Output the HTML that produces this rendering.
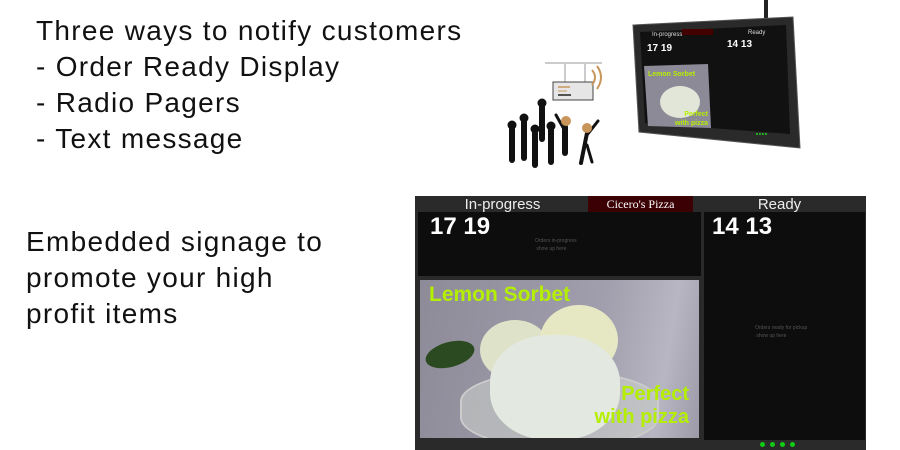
<!DOCTYPE html>
<html><head><meta charset="utf-8"><style>
body{margin:0;width:900px;height:450px;background:#fff;position:relative;overflow:hidden;font-family:"Liberation Sans",sans-serif}
.t{position:absolute;color:#111;font-size:28px;line-height:36px;letter-spacing:1.3px}
.a{position:absolute}
</style></head><body>
<div class="t" style="left:36px;top:13px">Three ways to notify customers<br>- Order Ready Display<br>- Radio Pagers<br>- Text message</div>
<div class="t" style="left:26px;top:224px;line-height:36px">Embedded signage to<br>promote your high<br>profit items</div>

<svg class="a" style="left:495px;top:55px" width="120" height="115" viewBox="0 0 120 115">
<line x1="50" y1="8" x2="107" y2="8" stroke="#ccc" stroke-width="2"/>
<line x1="70" y1="8" x2="70" y2="28" stroke="#ccc" stroke-width="2"/>
<line x1="90" y1="8" x2="90" y2="28" stroke="#ccc" stroke-width="2"/>
<rect x="58" y="27" width="40" height="18" fill="#e6e6e6" stroke="#444" stroke-width="1"/>
<line x1="63" y1="32" x2="75" y2="32" stroke="#c8955a" stroke-width="1.5"/>
<line x1="63" y1="36" x2="72" y2="36" stroke="#c8955a" stroke-width="1"/>
<line x1="63" y1="40" x2="76" y2="40" stroke="#222" stroke-width="1.5"/>
<path d="M97 15 Q103 22 97 30 M102 11 Q110 22 102 34" stroke="#c8955a" stroke-width="2" fill="none"/>
<g fill="#111" stroke="#111" stroke-linecap="round">
<circle cx="17" cy="70" r="4"/><line x1="17" y1="74" x2="17" y2="105" stroke-width="6"/>
<circle cx="29" cy="63" r="4"/><line x1="29" y1="67" x2="29" y2="103" stroke-width="6"/>
<circle cx="40" cy="74" r="4"/><line x1="40" y1="78" x2="40" y2="110" stroke-width="6"/>
<circle cx="47" cy="48" r="4"/><line x1="47" y1="52" x2="47" y2="84" stroke-width="6"/>
<circle cx="56" cy="71" r="4"/><line x1="56" y1="75" x2="56" y2="107" stroke-width="6"/>
<line x1="70" y1="72" x2="70" y2="98" stroke-width="6"/><line x1="70" y1="76" x2="61" y2="60" stroke-width="3"/>
<line x1="92" y1="78" x2="86" y2="108" stroke-width="4"/><line x1="92" y1="80" x2="103" y2="66" stroke-width="3"/><line x1="92" y1="90" x2="97" y2="107" stroke-width="3"/>
</g>
<circle cx="71" cy="66" r="5" fill="#c8955a"/><circle cx="92" cy="73" r="5" fill="#c8955a"/>
</svg>

<div class="a" style="left:764px;top:0;width:4px;height:20px;background:#222"></div>
<svg class="a" style="left:630px;top:14px" width="175" height="140" viewBox="0 0 175 140">
<polygon points="3,11 163,3 170,134 9,118" fill="#2a2a2a" stroke="#555" stroke-width="1"/>
<polygon points="10,18 156,11 160,120 15,109" fill="#111"/>
<polygon points="14,52 78,50 81,114 18,112" fill="#8d8a98"/>
<ellipse cx="50" cy="88" rx="20" ry="16" fill="#e2e6d8"/>
<text x="18" y="62" font-size="7" font-weight="bold" fill="#b4ee00" font-family="Liberation Sans">Lemon Sorbet</text>
<text x="78" y="102" font-size="7" font-weight="bold" fill="#b4ee00" text-anchor="end" font-family="Liberation Sans">Perfect</text>
<text x="78" y="111" font-size="7" font-weight="bold" fill="#b4ee00" text-anchor="end" font-family="Liberation Sans">with pizza</text>
<text x="17" y="37" font-size="10" font-weight="bold" fill="#fff" font-family="Liberation Sans">17 19</text>
<text x="97" y="33" font-size="10" font-weight="bold" fill="#fff" font-family="Liberation Sans">14 13</text>
<text x="22" y="22" font-size="6" fill="#ddd" font-family="Liberation Sans">In-progress</text>
<rect x="52" y="15" width="31" height="6" fill="#400"/>
<text x="118" y="20" font-size="6" fill="#ddd" font-family="Liberation Sans">Ready</text>
<g fill="#2c2"><circle cx="127" cy="120" r="1"/><circle cx="130" cy="120" r="1"/><circle cx="133" cy="120" r="1"/><circle cx="136" cy="120" r="1"/></g>
</svg>

<div class="a" style="left:415px;top:196px;width:451px;height:254px;background:#2a2a2a"></div>
<div class="a" style="left:415px;top:196px;width:175px;height:16px;color:#eee;font-size:15px;line-height:17px;text-align:center">In-progress</div>
<div class="a" style="left:588px;top:196px;width:105px;height:16px;background:#3a0004;color:#fff;font-family:'Liberation Serif',serif;font-size:12px;line-height:16px;text-align:center">Cicero's Pizza</div>
<div class="a" style="left:704px;top:196px;width:151px;height:16px;color:#eee;font-size:15px;line-height:17px;text-align:center">Ready</div>
<div class="a" style="left:418px;top:212px;width:283px;height:64px;background:#0d0d0d"></div>
<div class="a" style="left:430px;top:213px;color:#fff;font-weight:bold;font-size:24px">17 19</div>
<div class="a" style="left:535px;top:237px;color:#555;font-size:5px;line-height:8px">Orders in-progress<br>&nbsp;show up here</div>
<div class="a" style="left:704px;top:212px;width:161px;height:228px;background:#0d0d0d"></div>
<div class="a" style="left:712px;top:213px;color:#fff;font-weight:bold;font-size:24px">14 13</div>
<div class="a" style="left:755px;top:324px;color:#555;font-size:5px;line-height:8px">Orders ready for pickup<br>&nbsp;show up here</div>
<div class="a" style="left:420px;top:280px;width:279px;height:158px;background:linear-gradient(100deg,#8e8b99 0%,#a09dac 60%,#b8b6c2 85%,#9d9aa8 100%);overflow:hidden">
 <div class="a" style="left:60px;top:40px;width:70px;height:60px;border-radius:50%;background:#dde2c8"></div>
 <div class="a" style="left:120px;top:25px;width:78px;height:70px;border-radius:50%;background:#e6e8c4"></div>
 <div class="a" style="left:40px;top:90px;width:195px;height:75px;border-radius:50%/40%;background:rgba(200,205,200,.6);border:2px solid #ccc"></div>
 <div class="a" style="left:70px;top:55px;width:130px;height:105px;border-radius:45%;background:#e3e8e0"></div>
 <div class="a" style="left:5px;top:62px;width:50px;height:25px;border-radius:50%;background:#2c4a22;transform:rotate(-15deg)"></div>
 <div class="a" style="left:9px;top:3px;color:#b4ee00;font-weight:bold;font-size:21px">Lemon Sorbet</div>
 <div class="a" style="right:10px;top:103px;color:#b4ee00;font-weight:bold;font-size:20px;text-align:right;line-height:23px">Perfect<br>with pizza</div>
</div>
<div class="a" style="left:760px;top:442px;width:40px;height:5px">
<span class="a" style="left:0;width:5px;height:5px;border-radius:50%;background:#1c1"></span>
<span class="a" style="left:10px;width:5px;height:5px;border-radius:50%;background:#1c1"></span>
<span class="a" style="left:20px;width:5px;height:5px;border-radius:50%;background:#1c1"></span>
<span class="a" style="left:30px;width:5px;height:5px;border-radius:50%;background:#1c1"></span>
</div>
</body></html>
